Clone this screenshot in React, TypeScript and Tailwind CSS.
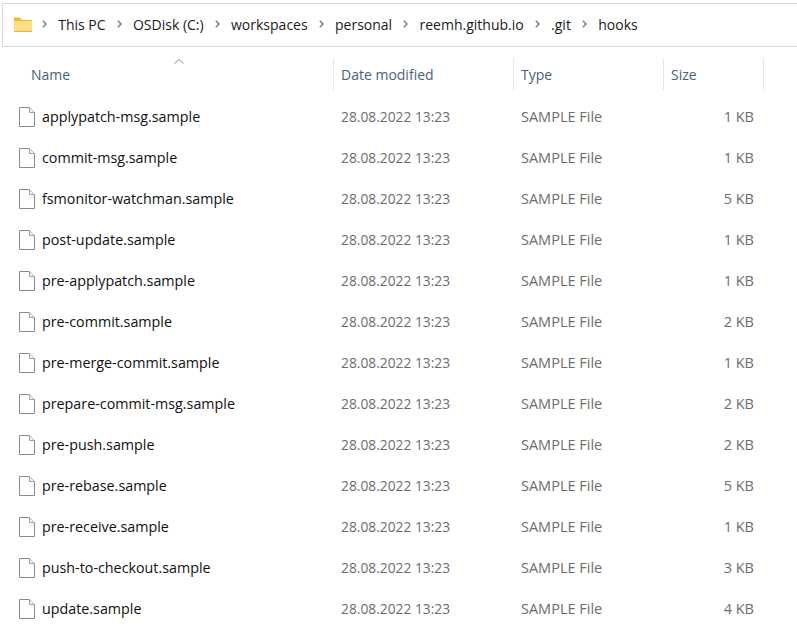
const files = [
  ['applypatch-msg.sample', '1 KB'],
  ['commit-msg.sample', '1 KB'],
  ['fsmonitor-watchman.sample', '5 KB'],
  ['post-update.sample', '1 KB'],
  ['pre-applypatch.sample', '1 KB'],
  ['pre-commit.sample', '2 KB'],
  ['pre-merge-commit.sample', '1 KB'],
  ['prepare-commit-msg.sample', '2 KB'],
  ['pre-push.sample', '2 KB'],
  ['pre-rebase.sample', '5 KB'],
  ['pre-receive.sample', '1 KB'],
  ['push-to-checkout.sample', '3 KB'],
  ['update.sample', '4 KB'],
]

const crumbs = ['This PC', 'OSDisk (C:)', 'workspaces', 'personal', 'reemh.github.io', '.git', 'hooks']

function Chevron() {
  return (
    <svg width="5" height="8" viewBox="0 0 5 8" fill="none" className="shrink-0">
      <path d="M0.8 0.8 L4 4 L0.8 7.2" stroke="#7a7a7a" strokeWidth="1.4" />
    </svg>
  )
}

function FolderIcon() {
  return (
    <svg width="18" height="15" viewBox="0 0 18 15" className="shrink-0">
      <path d="M0 1.5 Q0 0.5 1 0.5 H6 L8 3 H18 V14 Q18 15 17 15 H1 Q0 15 0 14 Z" fill="#f2b632" />
      <rect x="0" y="4" width="18" height="10" fill="#fcdc85" />
      <rect x="0" y="14" width="18" height="1" fill="#eeb02e" />
    </svg>
  )
}

function FileIcon() {
  return (
    <svg width="16" height="20" viewBox="0 0 16 20" fill="none" className="shrink-0">
      <path d="M0.5 0.5 H10.5 L15.5 5.5 V19.5 H0.5 Z" fill="#ffffff" stroke="#8a8a8a" />
      <path d="M10.5 0.5 V5.5 H15.5" fill="#f0f0f0" stroke="#a0a0a0" />
    </svg>
  )
}

export default function App() {
  return (
    <div className="w-[797px] h-[642px] overflow-hidden bg-white text-[14px] font-['Open_Sans','Noto_Sans',sans-serif] pt-[3px] pl-[2px]">
      {/* Address bar */}
      <div className="h-[44px] border border-r-0 border-[#d9d9d9] flex items-center pl-[11px] pb-[2px] text-[#1a1a1a]">
        <FolderIcon />
        <div className="flex items-center ml-[10px]">
          {crumbs.map((c, i) => (
            <div key={c} className="flex items-center">
              <Chevron />
              <span className={i === crumbs.length - 1 ? 'ml-[11.2px]' : 'ml-[11.2px] mr-[11.2px]'}>{c}</span>
            </div>
          ))}
        </div>
      </div>

      {/* Column headers */}
      <div className="relative h-[32px] mt-[11px] flex items-center text-[#4c607a]">
        <svg width="10" height="5" viewBox="0 0 10 5" fill="none" className="absolute left-[172px] top-[1px]">
          <path d="M0.5 4.5 L5 0.5 L9.5 4.5" stroke="#8a8a8a" />
        </svg>
        <div className="w-[332px] h-full flex items-center pl-[29px] border-r border-[#e5e5e5]">Name</div>
        <div className="w-[180px] h-full flex items-center pl-[7px] border-r border-[#e5e5e5]">Date modified</div>
        <div className="w-[150px] h-full flex items-center pl-[7px] border-r border-[#e5e5e5]">Type</div>
        <div className="w-[100px] h-full flex items-center pl-[7px] border-r border-[#e5e5e5]">Size</div>
      </div>

      {/* File rows */}
      <div className="mt-[6px]">
        {files.map(([name, size]) => (
          <div key={name} className="h-[41px] flex items-center leading-[20px]">
            <div className="w-[332px] flex items-center pl-[17px] text-[#111111] text-[14.3px]">
              <FileIcon />
              <span className="ml-[7px]">{name}</span>
            </div>
            <div className="w-[180px] pl-[7px] text-[#6d6d6d] text-[13.8px]">28.08.2022 13:23</div>
            <div className="w-[150px] pl-[7px] text-[#6d6d6d] text-[14.5px]">SAMPLE File</div>
            <div className="w-[90px] text-right text-[#6d6d6d] text-[14.5px]">{size}</div>
          </div>
        ))}
      </div>
    </div>
  )
}
